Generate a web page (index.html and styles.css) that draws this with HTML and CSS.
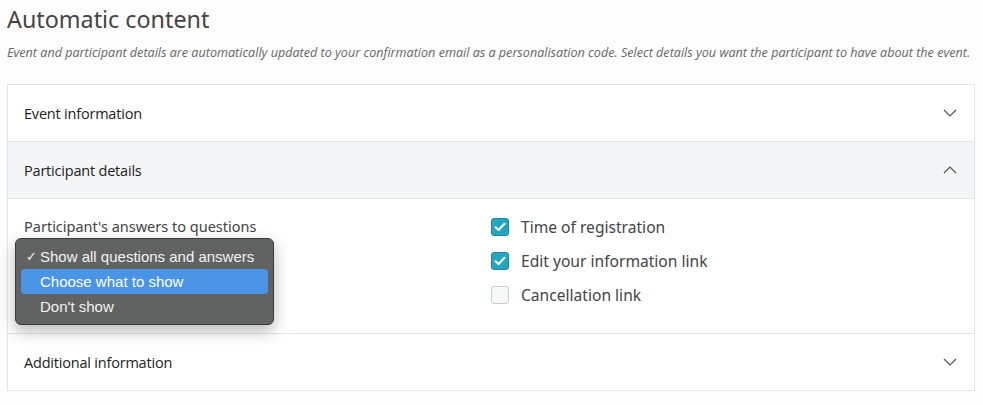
FILE: index.html
```html
<!DOCTYPE html>
<html>
<head>
<meta charset="utf-8">
<link rel="stylesheet" href="styles.css">
</head>
<body>
<h1 class="title">Automatic content</h1>
<p class="subtitle">Event and participant details are automatically updated to your confirmation email as a personalisation code. Select details you want the participant to have about the event.</p>
<div class="card">
  <div class="row">
    <span class="row-title">Event information</span>
    <svg class="chev" width="14" height="8" viewBox="0 0 14 8"><path d="M1 1l6 6 6-6" fill="none" stroke="#555" stroke-width="1.2"/></svg>
  </div>
  <div class="row row-open">
    <span class="row-title">Participant details</span>
    <svg class="chev" width="14" height="8" viewBox="0 0 14 8"><path d="M1 7l6-6 6 6" fill="none" stroke="#555" stroke-width="1.2"/></svg>
  </div>
  <div class="panel">
    <div class="col-left">
      <div class="field-label">Participant's answers to questions</div>
      <div class="select-wrap">
        <div class="select"></div>
        <div class="popup">
          <div class="opt"><span class="tick">✓</span>Show all questions and answers</div>
          <div class="opt opt-active">Choose what to show</div>
          <div class="opt">Don't show</div>
        </div>
      </div>
    </div>
    <div class="col-right">
      <label class="check"><span class="box on"><svg width="12" height="10" viewBox="0 0 12 10"><path d="M1.5 5.2l3 2.8 6-6.2" fill="none" stroke="#fff" stroke-width="2" stroke-linecap="round" stroke-linejoin="round"/></svg></span>Time of registration</label>
      <label class="check"><span class="box on"><svg width="12" height="10" viewBox="0 0 12 10"><path d="M1.5 5.2l3 2.8 6-6.2" fill="none" stroke="#fff" stroke-width="2" stroke-linecap="round" stroke-linejoin="round"/></svg></span>Edit your information link</label>
      <label class="check"><span class="box"></span>Cancellation link</label>
    </div>
  </div>
  <div class="row row-last">
    <span class="row-title">Additional information</span>
    <svg class="chev" width="14" height="8" viewBox="0 0 14 8"><path d="M1 1l6 6 6-6" fill="none" stroke="#555" stroke-width="1.2"/></svg>
  </div>
</div>
</body>
</html>
```
FILE: styles.css
```css
html, body {
  margin: 0;
  padding: 0;
  background: #fdfdfd;
}
body {
  padding: 0 8px 0 7px;
  font-family: "Noto Sans", "Open Sans", sans-serif;
  color: #333;
}
.title {
  margin: 4px 0 0;
  font-size: 23.3px;
  font-weight: 400;
  line-height: 30px;
  color: #444;
}
.subtitle {
  margin: 11px 0 0;
  font-family: "Open Sans", sans-serif;
  font-style: italic;
  font-size: 12.6px;
  line-height: 16px;
  color: #666;
  letter-spacing: 0;
  white-space: nowrap;
}
.card {
  margin-top: 23px;
  border: 1px solid #e4e4e4;
  background: #fff;
  width: 966px;
}
.row {
  height: 56px;
  display: flex;
  align-items: center;
  justify-content: space-between;
  padding: 0 17px 0 16px;
  border-bottom: 1px solid #e4e4e4;
}
.row-open {
  background: #f4f5f7;
}
.row-last {
  border-bottom: none;
}
.row-title {
  font-family: "Open Sans", sans-serif;
  font-size: 14.5px;
  color: #222;
  letter-spacing: -0.2px;
}
.chev {
  display: block;
}
.panel {
  display: grid;
  grid-template-columns: 1fr 1fr;
  padding: 18px 16px 0;
  height: 116px;
  border-bottom: 1px solid #e4e4e4;
}
.field-label {
  font-size: 14.5px;
  color: #444;
  line-height: 20px;
  margin-top: -1px;
}
.select-wrap {
  position: relative;
  margin-top: 2px;
}
.select {
  width: 231px;
  height: 32px;
  border: 1px solid #1fa6bf;
  border-radius: 3px;
  background: #fff;
}
.popup {
  position: absolute;
  left: -9px;
  top: 0;
  width: 247px;
  padding: 5px 5px;
  background: #616262;
  border: 1px solid #3c3c3c;
  border-radius: 6px;
  box-shadow: 0 6px 16px rgba(0,0,0,0.28);
  font-family: "Liberation Sans", Arial, sans-serif;
  font-size: 15px;
  color: #f2f2f2;
}
.opt {
  height: 25px;
  line-height: 25px;
  padding-left: 19px;
  border-radius: 4px;
  position: relative;
}
.opt-active {
  background: #4a94e6;
  color: #fff;
}
.tick {
  position: absolute;
  left: 5px;
  font-size: 13px;
}
.col-right {
  display: flex;
  flex-direction: column;
  gap: 16px;
  padding-top: 1px;
}
.check {
  display: flex;
  align-items: center;
  gap: 12px;
  font-size: 15.6px;
  color: #444;
  height: 18px;
}
.box {
  width: 16px;
  height: 16px;
  border: 1px solid #c9cdd2;
  border-radius: 3px;
  background: #f7f8fa;
  display: flex;
  align-items: center;
  justify-content: center;
}
.box.on {
  background: #24a6c0;
  border-color: #1b8aa0;
}
```
